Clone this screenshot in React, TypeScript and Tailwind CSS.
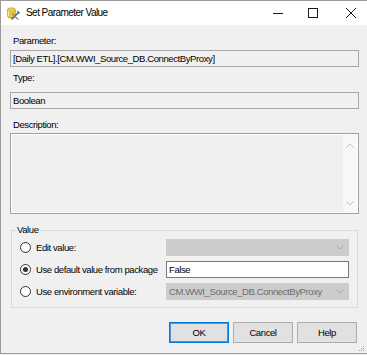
import React from "react";

function AppIcon() {
  return (
    <svg width="13" height="13" viewBox="0 0 13 13" className="shrink-0">
      <ellipse cx="4.5" cy="2.5" rx="3.8" ry="1.6" fill="#f5dc6a" stroke="#b8911f" strokeWidth="0.8" />
      <path d="M0.7 2.5 V9.5 A3.8 1.6 0 0 0 8.3 9.5 V2.5" fill="#e9c440" stroke="#b8911f" strokeWidth="0.8" />
      <path d="M1.5 4 V9" stroke="#fbeeb0" strokeWidth="1" />
      <path d="M5 12 L11.5 5.5" stroke="#55657a" strokeWidth="1.6" strokeLinecap="round" />
      <path d="M10.2 4.2 L12.6 6.6" stroke="#3d6fb0" strokeWidth="1.4" />
      <path d="M5.5 7 L11 12.2" stroke="#8a8f96" strokeWidth="1.3" strokeLinecap="round" />
    </svg>
  );
}

function Radio({ checked }: { checked?: boolean }) {
  return (
    <span className="w-[11px] h-[11px] rounded-full border border-[#333333] bg-white flex items-center justify-center shrink-0">
      {checked && <span className="w-[5px] h-[5px] rounded-full bg-[#333333]" />}
    </span>
  );
}

function Chevron({ up, color }: { up?: boolean; color: string }) {
  return (
    <svg width="8" height="5" viewBox="0 0 8 5" className="shrink-0">
      {up ? (
        <polyline points="0.5,4.5 4,1 7.5,4.5" fill="none" stroke={color} strokeWidth="1" />
      ) : (
        <polyline points="0.5,0.5 4,4 7.5,0.5" fill="none" stroke={color} strokeWidth="1" />
      )}
    </svg>
  );
}

function Combo({ text }: { text?: string }) {
  return (
    <div className="w-[183px] h-[17px] bg-[#cccccc] border border-[#cccccc] flex items-center pl-[2px] pr-[4px]">
      <span className="flex-1 text-[#6d6d6d] whitespace-nowrap overflow-hidden">{text}</span>
      <Chevron color="#a8a8a8" />
    </div>
  );
}

function Row({ label, checked, children }: { label: string; checked?: boolean; children: React.ReactNode }) {
  return (
    <div className="flex items-center h-[17px]">
      <div className="w-[154px] flex items-center pl-[8px] gap-[5px]">
        <Radio checked={checked} />
        <span className="whitespace-nowrap">{label}</span>
      </div>
      {children}
    </div>
  );
}

function Button({ label, primary }: { label: string; primary?: boolean }) {
  return (
    <div
      className={
        primary
          ? "w-[60px] h-[21px] bg-[#e1e1e1] border border-[#0078d7] shadow-[inset_0_0_0_1px_#4a98dc] flex items-center justify-center"
          : "w-[60px] h-[21px] bg-[#e1e1e1] border border-[#adadad] flex items-center justify-center"
      }
    >
      {label}
    </div>
  );
}

export default function App() {
  return (
    <div className="w-[367px] h-[355px] bg-[#f0f0f0] font-['Liberation_Sans',Arial,sans-serif] text-[9.5px] tracking-[-0.4px] leading-[12px] text-black relative overflow-hidden">
      <div className="h-[354px] border-l border-t border-b border-[#9a9a9a] flex flex-col">
        {/* Title bar */}
        <div className="h-[24px] bg-white flex items-center shrink-0">
          <span className="ml-[6px] flex">
            <AppIcon />
          </span>
          <span className="ml-[6px] text-[10px] tracking-[-0.55px]">Set Parameter Value</span>
          <div className="ml-auto flex items-center pr-[11px]">
            <svg width="10" height="10" viewBox="0 0 10 10">
              <line x1="0" y1="5.5" x2="10" y2="5.5" stroke="#1a1a1a" strokeWidth="1" />
            </svg>
            <svg width="10" height="10" viewBox="0 0 10 10" className="ml-[25px]">
              <rect x="0.5" y="0.5" width="9" height="9" fill="none" stroke="#1a1a1a" strokeWidth="1" />
            </svg>
            <svg width="10" height="10" viewBox="0 0 10 10" className="ml-[28px]">
              <line x1="0" y1="0" x2="10" y2="10" stroke="#1a1a1a" strokeWidth="1" />
              <line x1="10" y1="0" x2="0" y2="10" stroke="#1a1a1a" strokeWidth="1" />
            </svg>
          </div>
        </div>

        {/* Body */}
        <div className="flex-1 pl-[9px] pr-[8px] pt-[10px] flex flex-col">
          <div className="pl-[3px] h-[12px]">Parameter:</div>
          <div className="mt-[3px] h-[17px] border border-[#a8a8a8] bg-[#f0f0f0] flex items-center pl-[2px] whitespace-nowrap">
            [Daily ETL].[CM.WWI_Source_DB.ConnectByProxy]
          </div>

          <div className="mt-[5px] pl-[3px] h-[12px]">Type:</div>
          <div className="mt-[8px] h-[17px] border border-[#a8a8a8] bg-[#f0f0f0] flex items-center pl-[2px]">
            Boolean
          </div>

          <div className="mt-[10px] pl-[3px] h-[12px]">Description:</div>
          <div className="mt-[2px] h-[81px] border border-[#a0a0a0] shadow-[inset_1px_1px_0_#ffffff,inset_-1px_-1px_0_#ffffff] bg-[#f0f0f0] flex justify-end p-px">
            <div className="w-[14px] bg-[#f7f7f7] flex flex-col items-center justify-between pt-[8px] pb-[6px]">
              <Chevron up color="#c4c4c4" />
              <Chevron color="#c4c4c4" />
            </div>
          </div>

          {/* Value group */}
          <div className="mt-[16px] mx-px relative border border-[#d9d9d9] pt-[8px] pb-[7px] pr-[8px] flex flex-col gap-[5px]">
            <span className="absolute -top-[7px] left-[4px] px-px bg-[#f0f0f0] leading-[12px]">Value</span>
            <Row label="Edit value:">
              <Combo />
            </Row>
            <Row label="Use default value from package" checked>
              <div className="w-[183px] h-[17px] bg-white border border-[#7a7a7a] flex items-center pl-[2px]">False</div>
            </Row>
            <Row label="Use environment variable:">
              <Combo text="CM.WWI_Source_DB.ConnectByProxy" />
            </Row>
          </div>

          {/* Buttons */}
          <div className="mt-[14px] flex justify-end gap-[4px] pr-[2px]">
            <Button label="OK" primary />
            <Button label="Cancel" />
            <Button label="Help" />
          </div>
        </div>
      </div>

      {/* resize grip */}
      <svg width="7" height="7" viewBox="0 0 7 7" className="absolute right-[2px] bottom-[3px]">
        <rect x="5" y="1" width="1" height="1" fill="#a0a0a0" />
        <rect x="3" y="3" width="1" height="1" fill="#a0a0a0" />
        <rect x="5" y="3" width="1" height="1" fill="#a0a0a0" />
        <rect x="1" y="5" width="1" height="1" fill="#a0a0a0" />
        <rect x="3" y="5" width="1" height="1" fill="#a0a0a0" />
        <rect x="5" y="5" width="1" height="1" fill="#a0a0a0" />
      </svg>
    </div>
  );
}
